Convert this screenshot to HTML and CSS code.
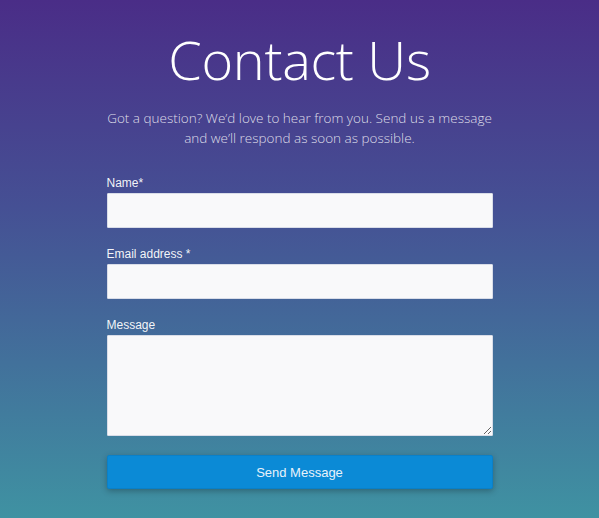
FILE: index.html
```html
<!DOCTYPE html>
<html lang="en">
<head>
<meta charset="utf-8">
<title>Contact Us</title>
<link rel="stylesheet" href="styles.css">
</head>
<body>
<main class="page">
  <div class="contact">
    <h1 class="title">Contact Us</h1>
    <p class="intro">Got a question? We’d love to hear from you. Send us a message<br>and we’ll respond as soon as possible.</p>
    <form class="form">
      <div class="field">
        <label class="label" for="name">Name*</label>
        <input class="input" id="name" type="text">
      </div>
      <div class="field">
        <label class="label" for="email">Email address *</label>
        <input class="input" id="email" type="email">
      </div>
      <div class="field">
        <label class="label" for="msg">Message</label>
        <textarea class="input textarea" id="msg"></textarea>
      </div>
      <button class="submit" type="button">Send Message</button>
    </form>
  </div>
</main>
</body>
</html>
```
FILE: styles.css
```css
* { box-sizing: border-box; }
html, body { margin: 0; padding: 0; }
body {
  height: 518px;
  overflow: hidden;
  background: linear-gradient(180deg, #4a2d87 0%, #455094 40%, #3f92a2 100%);
  font-family: "Liberation Sans", Arial, sans-serif;
  color: #fff;
}
.page {
  display: flex;
  justify-content: center;
  padding-top: 27px;
}
.contact {
  width: 386px;
  display: flex;
  flex-direction: column;
}
.title {
  margin: 0;
  font-family: "Open Sans", sans-serif;
  font-weight: 300;
  font-size: 54px;
  letter-spacing: -0.3px;
  line-height: 64px;
  text-align: center;
  color: #fff;
  white-space: nowrap;
}
.intro {
  margin: 17px -20px 0;
  font-family: "Open Sans", sans-serif;
  font-weight: 300;
  font-size: 13.5px;
  line-height: 20px;
  text-align: center;
  color: rgba(255,255,255,0.82);
}
.form {
  margin-top: 28px;
  display: flex;
  flex-direction: column;
  gap: 19px;
}
.field {
  display: flex;
  flex-direction: column;
}
.label {
  font-size: 12px;
  line-height: 14px;
  margin-bottom: 3px;
  color: rgba(255,255,255,0.95);
}
.input {
  display: block;
  width: 100%;
  height: 35px;
  margin: 0;
  border: 1px solid #d9dde8;
  background: #f9f9fa;
  border-radius: 1px;
  font: 13px "Liberation Sans", Arial, sans-serif;
  padding: 6px 8px;
}
.textarea {
  height: 101px;
  resize: vertical;
}
.submit {
  height: 34px;
  width: 100%;
  border: 1px solid #0a80c8;
  border-radius: 2px;
  background: #0b8ad6;
  color: #e8f2fb;
  font: 13px "Liberation Sans", Arial, sans-serif;
  box-shadow: 0 2px 6px rgba(0,0,0,0.28);
}
```
